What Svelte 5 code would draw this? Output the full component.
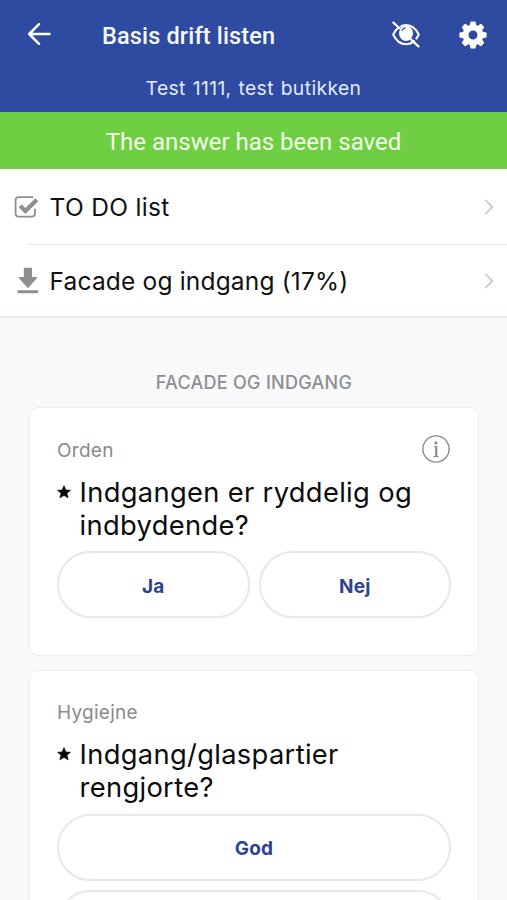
<script>
  const sections = [
    { icon: 'check', label: 'TO DO list', spacing: 0.33 },
    { icon: 'download', label: 'Facade og indgang (17%)', spacing: 0.18 }
  ];
  const questions = [
    { tag: 'Orden', lines: ['Indgangen er ryddelig og', 'indbydende?'], info: true, stacked: false, answers: ['Ja', 'Nej'] },
    { tag: 'Hygiejne', lines: ['Indgang/glaspartier', 'rengjorte?'], info: false, stacked: true, answers: ['God', ''] }
  ];
</script>

<div class="screen">
  <header>
    <div class="bar">
      <svg class="back" width="24" height="24" viewBox="0 0 24 24" fill="none" stroke="#fff" stroke-width="2.5" stroke-linecap="round" stroke-linejoin="round">
        <path d="M22.5 12H2.2M12 2.2L2.2 12L12 21.8" />
      </svg>
      <h1>Basis drift listen</h1>
      <svg class="eye" width="28" height="28" viewBox="0 0 28 28" fill="none" stroke="#fff" stroke-width="2" stroke-linecap="round">
        <path d="M1.2 13.5C4 8 8.5 4 14 4S24 8 26.8 13.5C24 19.5 19.5 23.2 14 23.2S4 19.5 1.2 13.5Z" />
        <ellipse cx="14" cy="12.2" rx="7" ry="7.8" fill="#fff" stroke="none" />
        <path d="M10.2 9.2Q11.2 7.2 13 7" stroke="#4560ae" stroke-width="1.4" />
        <path d="M3.2 .6L7.6 4.8M21.4 17.2L27.6 23" stroke="#2e4ba1" stroke-width="1.8" />
        <path d="M1.4 1.6L7.4 7.2M19.2 18.6L26.4 25.4" stroke-width="2.2" />
      </svg>
      <svg class="gear" width="28" height="28" viewBox="0 0 28 28" fill="none" stroke="#fff">
        <circle cx="14" cy="14" r="7.4" stroke-width="5.8" />
        {#each [0, 45, 90, 135, 180, 225, 270, 315] as angle}
          <path d="M10.5 5L11.4 .9Q11.6 .4 12.2 .4H15.8Q16.4 .4 16.6 .9L17.5 5Z" fill="#fff" stroke="none" transform="rotate({angle} 14 14)" />
        {/each}
      </svg>
    </div>
    <p class="place">Test 1111, test butikken</p>
  </header>

  <div class="banner"><span>The answer has been saved</span></div>

  <nav>
    {#each sections as section}
      <div class="row">
        {#if section.icon === 'check'}
          <svg width="26" height="24" viewBox="0 0 26 24" fill="none" stroke="#8e8e90">
            <path d="M18.5 2.2H4.8Q1.6 2.2 1.6 5.2V18.6Q1.6 21.7 4.8 21.7H17.8Q21 21.7 21 18.6V14.5" stroke-width="1.8" stroke-linecap="round" />
            <path d="M6.2 10.8L11.4 16L22.9 4.8" stroke-width="4.2" />
          </svg>
        {:else}
          <svg width="26" height="28" viewBox="0 0 26 28" fill="#8e8e90">
            <path d="M9.8 1.5Q9.8 .8 10.6 .8H17.2Q18 .8 18 1.5V10H22.6Q23.8 10 23 11L14.6 20.6Q13.9 21.4 13.2 20.6L4.8 11Q4 10 5.2 10H9.8Z" />
            <rect x="3.3" y="23.2" width="21" height="3" rx="1.4" />
          </svg>
        {/if}
        <span class="label" style="letter-spacing: {section.spacing}px">{section.label}</span>
        <svg class="chevron" width="10" height="16" viewBox="0 0 10 16" fill="none" stroke="#cbcbcd" stroke-width="1.8">
          <path d="M1.5 1.2L8.2 8L1.5 14.8" />
        </svg>
      </div>
    {/each}
  </nav>

  <main>
    <h2>FACADE OG INDGANG</h2>
    {#each questions as question}
      <section class="card">
        <div class="top">
          <span class="tag">{question.tag}</span>
          {#if question.info}
            <svg class="info" width="28" height="28" viewBox="0 0 28 28" fill="none" stroke="#8b8b8b" stroke-width="1.4">
              <circle cx="14" cy="14" r="13.1" />
              <circle cx="13.9" cy="7.9" r="1.6" fill="#8b8b8b" stroke="none" />
              <path d="M11.8 11.4H14.2V21.4" stroke-width="1" />
              <path d="M14.2 11V21.4" stroke-width="2.1" />
              <path d="M11.6 21.6H16.6" stroke-width="1.2" />
            </svg>
          {/if}
        </div>
        <div class="question" class:raised={question.stacked}>
          <svg width="14" height="14" viewBox="0 0 14 14" fill="#050505" stroke="#050505" stroke-width=".7" stroke-linejoin="round">
            <path d="M7 .7L8.8 5L13.4 5.3L9.9 8.2L11.1 12.8L7 10.3L2.9 12.8L4.1 8.2L.6 5.3L5.2 5Z" />
          </svg>
          <h3>{question.lines[0]}<br />{question.lines[1]}</h3>
        </div>
        <div class="answers" class:stacked={question.stacked}>
          {#each question.answers as answer}
            <button>{answer}</button>
          {/each}
        </div>
      </section>
    {/each}
  </main>
</div>

<style>
  .screen {
    width: 507px;
    height: 900px;
    overflow: hidden;
    display: flex;
    flex-direction: column;
    background: #f8f9fb;
    font-family: Inter, 'Liberation Sans', sans-serif;
    color: #111;
  }
  h1, h2, h3, p { margin: 0; font-weight: 400; white-space: nowrap; }
  svg { display: block; flex: none; }
  header { height: 112px; flex: none; background: #2e4ba1; color: #fff; }
  .bar { height: 70px; display: flex; align-items: center; padding: 0 20px 0 27px; }
  .back { margin-top: -2px; }
  h1 {
    margin-left: 51px;
    font: 500 23.5px/30px Roboto, sans-serif;
    letter-spacing: .15px;
    color: #f5f8ff;
    padding-top: 2px;
  }
  .eye { margin-left: auto; }
  .gear { margin-left: 39px; }
  .place { text-align: center; font-size: 19.3px; line-height: 37px; letter-spacing: .4px; word-spacing: 1px; color: #e4eafa; }
  .banner {
    height: 57px;
    flex: none;
    display: flex;
    align-items: center;
    justify-content: center;
    padding-top: 3px;
    box-sizing: border-box;
    background: #6fce41;
    color: #f2fde9;
    font: 400 24px/30px Roboto, sans-serif;
  }
  nav { height: 149px; box-sizing: border-box; flex: none; background: #fff; border-bottom: 2px solid #e8e9ea; }
  .row { display: flex; align-items: center; height: 74px; padding: 2px 13px 0 14px; box-sizing: border-box; }
  .row + .row {
    background: linear-gradient(#e5e5e6, #e5e5e6) 29px .5px / 100% 1px no-repeat;
  }
  .label { margin-left: 9.5px; font-size: 24.5px; white-space: nowrap; }
  .chevron { margin-left: auto; }
  main { padding: 0 28px 0 29px; display: flex; flex-direction: column; }
  h2 { margin: 53px 0 12px; text-align: center; font-size: 18px; line-height: 24px; font-weight: 500; letter-spacing: .27px; color: #8e8f92; }
  .card {
    height: 248.5px;
    box-sizing: border-box;
    flex: none;
    margin-bottom: 14px;
    padding: 27px;
    background: #fff;
    border: 1px solid #ebedef;
    border-radius: 9px;
  }
  .card:last-child { height: 360px; }
  .top { display: flex; height: 28px; justify-content: space-between; align-items: center; }
  .info { margin-right: 1px; }
  .tag { color: #8a8a8a; font-size: 19px; letter-spacing: .27px; padding-top: 2px; }
  .question { display: flex; margin-top: 13px; }
  .raised { margin-top: 12px; margin-bottom: 10px; }
  .question svg { margin-top: 9px; }
  h3 { margin-left: 8.5px; font-size: 27.3px; line-height: 33px; letter-spacing: .34px; color: #0c0c0c; }
  .answers { display: flex; gap: 9px; margin-top: 9px; }
  .stacked { flex-direction: column; margin-top: 0; }
  button {
    flex: 1;
    height: 67px;
    flex-basis: 0;
    box-sizing: border-box;
    padding: 4px 0 0;
    border: 2.5px solid #e8e8e8;
    border-radius: 34px;
    background: #fff;
    color: #2c4390;
    font: 700 19px/24px Inter, sans-serif;
    letter-spacing: .15px;
  }
  .stacked button { flex: none; }
</style>
